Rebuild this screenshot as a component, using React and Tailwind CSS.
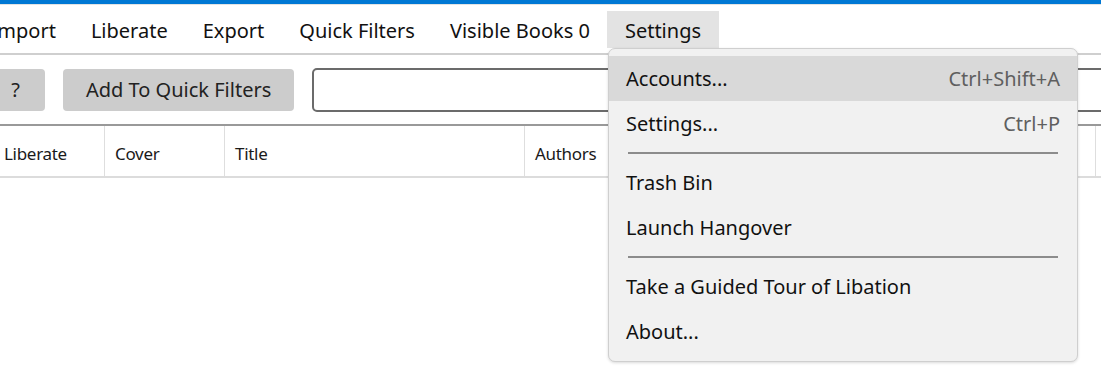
const menuItems = ["Import", "Liberate", "Export", "Quick Filters", "Visible Books 0"];

const columns = [
  { label: "Liberate", w: "w-[105px]" },
  { label: "Cover", w: "w-[120px]" },
  { label: "Title", w: "w-[300px]" },
  { label: "Authors", w: "w-[571px]" },
];

const MenuRow = ({ label, shortcut, active }) => (
  <div
    className={`flex items-center justify-between h-[45px] pl-[17px] pr-[17px] ${
      active ? "bg-[#d9d9d9]" : ""
    }`}
  >
    <span className="text-[#111]">{label}</span>
    {shortcut && <span className="text-[#5f5f5f]">{shortcut}</span>}
  </div>
);

const Separator = () => (
  <div className="pt-[6px] pb-[6px] px-[19px]">
    <div className="h-[2px] bg-[#8c8c8c]" />
  </div>
);

const App = () => {
  return (
    <div
      className="relative w-[1101px] h-[370px] overflow-hidden bg-white text-[20px] text-[#111]"
      style={{ fontFamily: '"Noto Sans", "Open Sans", sans-serif' }}
    >
      {/* title accent */}
      <div className="h-[4px] bg-[#0078d4]" />
      <div className="h-[1px] bg-[#e3e3e3]" />

      {/* menu bar */}
      <div className="flex items-center h-[50px] border-b-2 border-[#cfcfcf] -ml-[27px]">
        {menuItems.map((m) => (
          <div key={m} className="px-[17.5px] h-[37px] pt-[3px] flex items-center">
            {m}
          </div>
        ))}
        <div className="px-[17.5px] h-[37px] pt-[3px] flex items-center bg-[#e3e3e3]">Settings</div>
      </div>

      {/* toolbar */}
      <div className="flex items-center gap-[18px] h-[71px] border-b-2 border-[#999]">
        <button className="h-[42px] w-[45px] rounded-r-[4px] bg-[#cccccc] text-[#222] pr-[14px]">
          ?
        </button>
        <button className="h-[42px] px-[23px] rounded-[4px] bg-[#cccccc] text-[#222]">
          Add To Quick Filters
        </button>
        <div className="flex-1 h-[44px] border-2 border-[#6b6b6b] rounded-[5px] -mr-[20px]" />
      </div>

      {/* grid header */}
      <div className="flex h-[52px] border-b-2 border-[#dcdcdc] text-[17px] tracking-[-0.3px] text-[#1a1a1a]">
        {columns.map((c, i) => (
          <div
            key={c.label}
            className={`${c.w} shrink-0 flex items-center pt-[5px] border-r border-[#dedede] ${
              i > 0 ? "pl-[10px]" : "pl-[4px]"
            }`}
          >
            {c.label}
          </div>
        ))}
      </div>

      {/* Settings dropdown */}
      <div className="absolute left-[608px] top-[48px] w-[470px] h-[314px] bg-[#f1f1f1] border border-[#cfcfcf] rounded-[7px] shadow-[0_1px_3px_rgba(0,0,0,0.15)] pt-[7px]">
        <MenuRow label="Accounts..." shortcut="Ctrl+Shift+A" active />
        <MenuRow label="Settings..." shortcut="Ctrl+P" />
        <Separator />
        <MenuRow label="Trash Bin" />
        <MenuRow label="Launch Hangover" />
        <Separator />
        <MenuRow label="Take a Guided Tour of Libation" />
        <MenuRow label="About..." />
      </div>
    </div>
  );
};

export default App;
